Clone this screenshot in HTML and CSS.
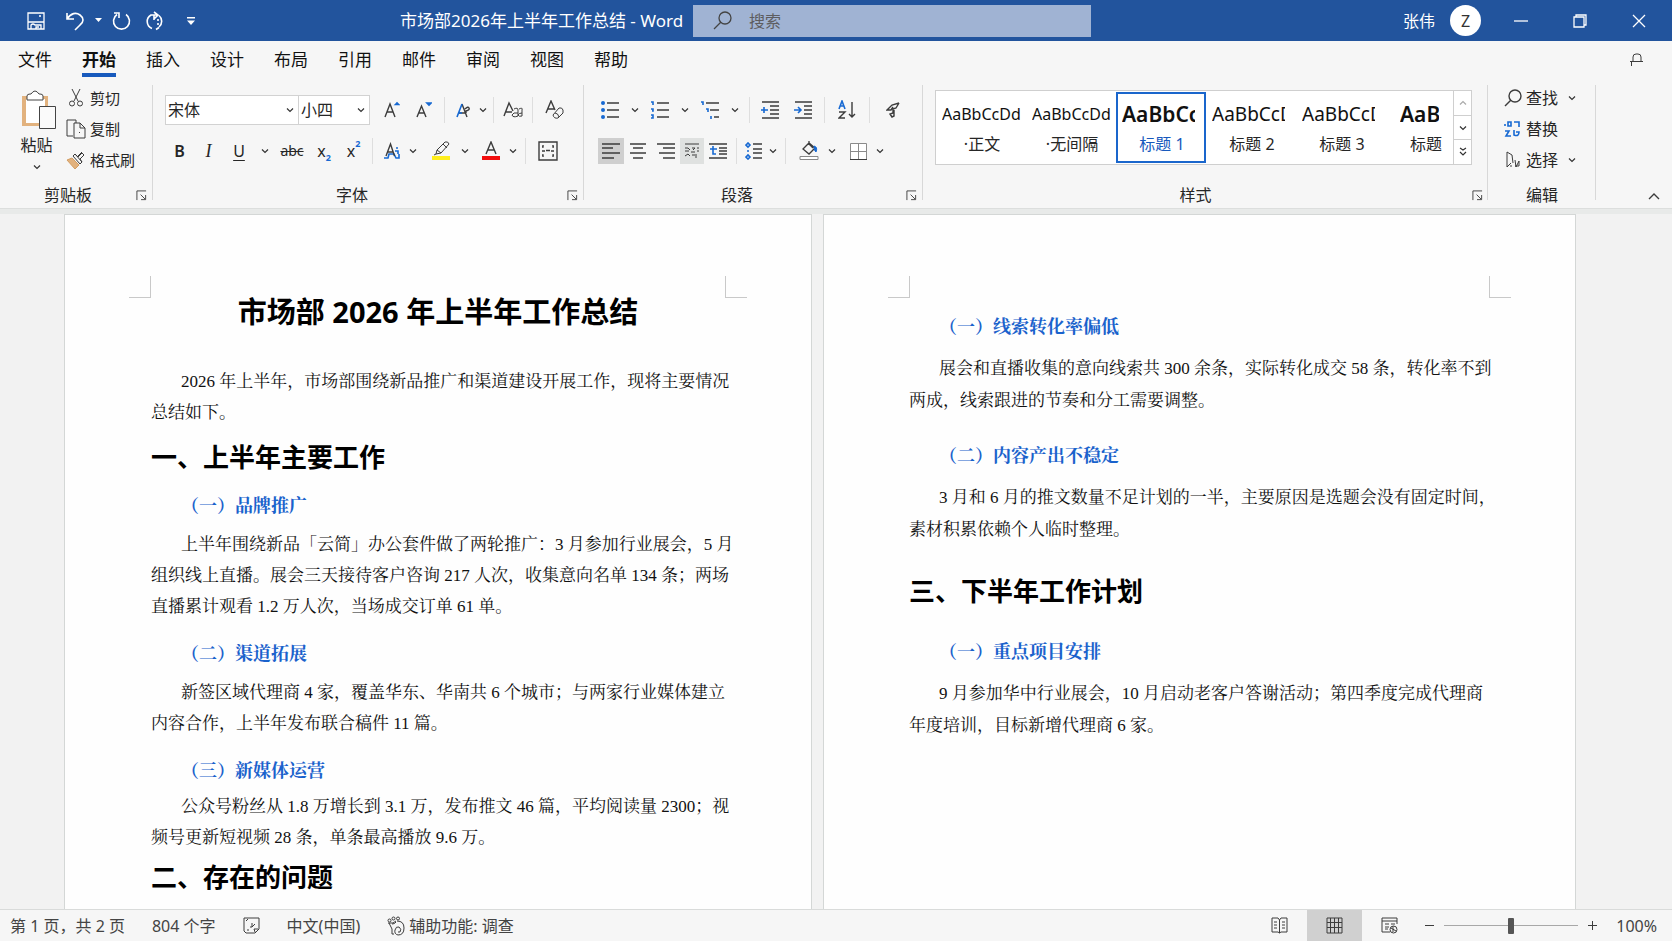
FILE: index.html
```html
<!DOCTYPE html>
<html lang="zh-CN">
<head>
<meta charset="utf-8">
<meta name="viewport" content="width=device-width, initial-scale=1">
<title>市场部2026年上半年工作总结 - Word</title>
<link rel="stylesheet" href="styles.css">
</head>
<body>
<svg class="defs" aria-hidden="true">
  <symbol id="chev" viewBox="0 0 8 8"><path d="M1 2.5l3 3 3-3"/></symbol>
  <symbol id="launch" viewBox="0 0 12 12"><path d="M1 11V1h10M5 5l5 5M10.500 5.500v5h-5"/></symbol>
</svg>

<header class="titlebar">
  <div class="quick">
    <button class="tb save" aria-label="保存"><svg class="ic" width="18" height="18" viewBox="0 0 18 18"><path d="M1 1h16v16H1zM1 10h16M4 17v-4q2-2 4 0h6v4M9 17v-2h3M12 4h2"/></svg></button>
    <button class="tb undo" aria-label="撤消"><svg class="ic bold" width="20" height="20" viewBox="0 0 20 20"><path d="M2 2v6h7M2 8C6 2 11 1 15 4s4 7 0 10l-5 5"/></svg></button>
    <button class="tb caret" aria-label="撤消选项"><svg width="7" height="5" viewBox="0 0 7 5"><path d="M0 0h7L3.500 4z" fill="#fff"/></svg></button>
    <button class="tb redo" aria-label="重复"><svg class="ic bold" width="20" height="20" viewBox="0 0 20 20"><path d="M14 3.500a8 8 0 1 1-9 0M2 2h5v5"/></svg></button>
    <button class="tb sync" aria-label="同步"><svg class="ic bold" width="18" height="20" viewBox="0 0 18 20"><path d="M6 17.500a7.500 7.500 0 0 1-1-13.500h6M8 1l4 3-4 4M8 4v5M13 4.500a7.500 7.500 0 0 1 0 11.500M10 18.500l3-2M12 8v2M12 12v2"/></svg></button>
    <button class="tb more" aria-label="自定义快速访问工具栏"><svg width="8" height="8" viewBox="0 0 8 8"><path d="M0 0h8v1.500H0zM0 3.500h8L4 8z" fill="#fff"/></svg></button>
  </div>
  <div class="doc-name">市场部2026年上半年工作总结 - Word</div>
  <label class="search">
    <svg class="ic" width="20" height="20" viewBox="0 0 20 20"><circle cx="12" cy="7" r="6"/><path d="M8 11l-7 7"/></svg>
    <input type="search" placeholder="搜索" aria-label="搜索">
  </label>
  <div class="window">
    <span class="user">张伟</span>
    <span class="avatar">Z</span>
    <button class="tb win" aria-label="最小化"><svg class="ic" width="14" height="14" viewBox="0 0 14 14"><path d="M0 7h14"/></svg></button>
    <button class="tb win" aria-label="向下还原"><svg class="ic" width="14" height="14" viewBox="0 0 14 14"><path d="M1 3h10v10H1zM3 3V1h10v10h-2"/></svg></button>
    <button class="tb win" aria-label="关闭"><svg class="ic" width="14" height="14" viewBox="0 0 14 14"><path d="M1 1l12 12M13 1L1 13"/></svg></button>
  </div>
</header>

<nav class="tabs">
  <button>文件</button><button class="active">开始</button><button>插入</button><button>设计</button><button>布局</button><button>引用</button><button>邮件</button><button>审阅</button><button>视图</button><button>帮助</button>
  <button class="flag" aria-label="批注"><svg class="ic" width="14" height="14" viewBox="0 0 14 14"><path d="M1.500 13V8.500M0 8.500h13M3 8V4q0-3 3-3h2q3 0 3 3v4"/></svg></button>
</nav>

<section class="ribbon">
  <div class="group clipboard">
    <div class="clip">
      <button class="paste">
        <svg width="36" height="40" viewBox="0 0 36 40"><path d="M1 6h26v30H1z" fill="#e2b27e"/><path d="M5 9h19v24H5z" fill="#fff"/><path d="M6 10V6q0-2 3-2h1q4-6 8 0h1q3 0 3 2v4z" fill="#fff" stroke="#444"/><path d="M18.500 16.500h16v22h-16z" fill="#fafafa" stroke="#444"/></svg>
        <span>粘贴</span>
        <svg class="chev" width="8" height="8"><use href="#chev"/></svg>
      </button>
      <div class="clip-list">
        <button><svg class="ic" width="20" height="18" viewBox="0 0 20 18"><path d="M6 0l6 12M14 0L8 12"/><circle cx="6" cy="14.500" r="2.500"/><circle cx="14" cy="14.500" r="2.500"/></svg>剪切</button>
        <button><svg class="ic" width="20" height="20" viewBox="0 0 20 20"><path d="M7 17H1V1h9v3M8 4h6l5 5v10H8zM14 4v5h5M13 14l1-1"/></svg>复制</button>
        <button><svg class="ic" width="20" height="18" viewBox="0 0 20 18"><path d="M1 9l5-2 7 7-4 4z" fill="#e2b27e" stroke="#d29d63"/><path d="M7 5l7 8 2-2-2-3 4-4-2-2-4 4-3-3zM9 3l7 8M12 5l4-4"/></svg>格式刷</button>
      </div>
    </div>
    <div class="caption"><span>剪贴板</span><button class="launch" aria-label="剪贴板设置"><svg class="ic" width="11" height="11"><use href="#launch"/></svg></button></div>
  </div>

  <div class="group font">
    <div class="row">
      <span class="combo name"><select aria-label="字体"><option>宋体</option></select><svg class="chev" width="8" height="8"><use href="#chev"/></svg></span>
      <span class="combo size"><select aria-label="字号"><option>小四</option></select><svg class="chev" width="8" height="8"><use href="#chev"/></svg></span>
      <button class="w32 lead" aria-label="增大字号"><svg class="ic glyph" width="16" height="18" viewBox="0 0 16 18"><path d="M1 16L6 3l5 13M3 11h6"/><path class="blue" d="M11.500 3.500l1.500-1.500 1.500 1.500z"/></svg></button>
      <button class="w32" aria-label="减小字号"><svg class="ic glyph" width="16" height="18" viewBox="0 0 16 18"><path d="M1 16L5.500 5l4.500 11M3 12h5.500"/><path class="blue" d="M11 2h4l-2 2z"/></svg></button>
      <i class="sep"></i>
      <button class="w28" aria-label="文本效果"><svg class="ic glyph" width="14" height="18" viewBox="0 0 14 18"><path d="M6 3l5 13M3 12h6M9 8q3-3 4-1t-3 3v2"/><path class="blue" d="M1 16L6 3M3 12h3"/></svg></button><button class="w12" aria-label="更多"><svg class="chev" width="8" height="8"><use href="#chev"/></svg></button>
      <i class="sep"></i>
      <button class="w30" aria-label="更改大小写"><svg class="ic" width="20" height="18" viewBox="0 0 20 18"><path d="M1 15L6 2l4 8M3 11h6" stroke-width="1.400"/><path d="M11 8q4-2 4 1v6q-5 2-6-1 1-3 6-2M16 8q4-2 3 1v6q-3 1-4-1 1-2 4-2"/></svg></button>
      <i class="sep"></i>
      <button class="w36" aria-label="清除格式"><svg class="ic" width="20" height="20" viewBox="0 0 20 20"><path d="M1 13L6 1l4 9M3 9h6" stroke-width="1.400"/><path d="M8 15l6-7q3-1 4 2v3l-5 5q-4 1-5-3zM10 13q3 0 4 4"/></svg></button>
    </div>
    <div class="row">
      <button class="w29 bold-letter" aria-label="加粗">B</button>
      <button class="w29 italic-letter" aria-label="倾斜">I</button>
      <button class="w32 underline-letter" aria-label="下划线">U</button><button class="w20" aria-label="下划线样式"><svg class="chev" width="8" height="8"><use href="#chev"/></svg></button>
      <button class="w34 strike" aria-label="删除线">abc</button>
      <button class="w30 letter" aria-label="下标">x<sub>2</sub></button>
      <button class="w29 letter" aria-label="上标">x<sup>2</sup></button>
      <i class="sep"></i>
      <button class="w30" aria-label="文字效果"><svg class="ic glyph" width="16" height="18" viewBox="0 0 16 18"><path class="blue" d="M0 16h4l1-4h5l2 4h3v-4M12 6h2M11 9h3v3"/><path d="M2 14L6.500 2l4 12M4 10h5"/></svg></button><button class="w12" aria-label="更多"><svg class="chev" width="8" height="8"><use href="#chev"/></svg></button>
      <button class="w36 next" aria-label="突出显示"><svg class="ic" width="20" height="20" viewBox="0 0 20 20"><path d="M5 13l1-4 8-8q3-1 4 2l-8 9zM6 9l4 3M12 3l4 4M5 13l-2 1"/><path d="M1 15h18v4H1z" fill="#ffee1c" stroke="none"/></svg></button><button class="w12" aria-label="更多"><svg class="chev" width="8" height="8"><use href="#chev"/></svg></button>
      <button class="w32 next" aria-label="字体颜色"><svg class="ic glyph" width="18" height="20" viewBox="0 0 18 20"><path d="M4 13L9 1l5 12M6 9h6"/><path d="M0 15h18v4H0z" fill="#f20d0d" stroke="none"/></svg></button><button class="w12" aria-label="更多"><svg class="chev" width="8" height="8"><use href="#chev"/></svg></button>
      <i class="sep next"></i>
      <button class="w36" aria-label="字符边框"><svg class="ic glyph" width="20" height="20" viewBox="0 0 20 20"><path d="M1 1h18v18H1z"/><path d="M5 4v2H4M15 4v2h1M5 16v-2H4M15 16v-2h1M4 10h3M8 9.500h4M13 10h3"/></svg></button>
    </div>
    <div class="caption"><span>字体</span><button class="launch" aria-label="字体设置"><svg class="ic" width="11" height="11"><use href="#launch"/></svg></button></div>
  </div>

  <div class="group para">
    <div class="row">
      <button class="w30" aria-label="项目符号"><svg class="ic thick" width="18" height="18" viewBox="0 0 18 18"><path d="M6 2h12M6 9h12M6 16h12"/><g class="dot"><circle cx="2" cy="2" r="2"/><circle cx="2" cy="9" r="2"/><circle cx="2" cy="16" r="2"/></g></svg></button><button class="w20" aria-label="更多"><svg class="chev" width="8" height="8"><use href="#chev"/></svg></button>
      <button class="w30" aria-label="编号"><svg class="ic thick" width="18" height="18" viewBox="0 0 18 18"><path d="M6 2h12M6 9h12M6 16h12"/><path class="blue" d="M0 1h2v3M0 8h2v2H1M0 14h2v3H0"/></svg></button><button class="w20" aria-label="更多"><svg class="chev" width="8" height="8"><use href="#chev"/></svg></button>
      <button class="w30" aria-label="多级列表"><svg class="ic thick" width="18" height="18" viewBox="0 0 18 18"><path d="M5 2h13M9 9h9M13 16h5"/><path class="blue" d="M0 1h2v3M5 8h2v3M10 15v3"/></svg></button><button class="w20" aria-label="更多"><svg class="chev" width="8" height="8"><use href="#chev"/></svg></button>
      <i class="sep"></i>
      <button class="w32" aria-label="减少缩进量"><svg class="ic thick" width="18" height="18" viewBox="0 0 18 18"><path d="M1 1h17M9 5h9M9 9h9M9 13h9M1 17h17"/><path class="blue" d="M0 9h7M3 6v6"/></svg></button>
      <button class="w34" aria-label="增加缩进量"><svg class="ic thick" width="18" height="18" viewBox="0 0 18 18"><path d="M1 1h17M10 5h8M10 9h8M10 13h8M1 17h17"/><path class="blue" d="M0 9h7M4 6l3 3-3 3"/></svg></button>
      <i class="sep"></i>
      <button class="w36" aria-label="排序"><svg class="ic glyph" width="18" height="20" viewBox="0 0 18 20"><path class="blue" d="M1 9l3-8 3 8M2 6h4"/><path d="M1 12h6l-6 6h6M14 2v15M11 14l3 3 3-3"/></svg></button>
      <i class="sep"></i>
      <button class="w38" aria-label="显示编辑标记"><svg class="ic glyph" width="14" height="18" viewBox="0 0 14 18"><path d="M13 2L6 4 1 9h4l2-3M13 2l-3 5-3 1v4l-3 1 2 3 2-1V9"/></svg></button>
    </div>
    <div class="row">
      <button class="w26 on first" aria-label="左对齐"><svg class="ic thick" width="18" height="18" viewBox="0 0 18 18"><path d="M0 2h18M0 6h11M0 11h18M0 16h12"/></svg></button>
      <button class="w28" aria-label="居中"><svg class="ic thick" width="18" height="18" viewBox="0 0 18 18"><path d="M1 2h16M4 6h10M1 11h16M4 16h10"/></svg></button>
      <button class="w28" aria-label="右对齐"><svg class="ic thick" width="18" height="18" viewBox="0 0 18 18"><path d="M0 2h18M6 6h12M2 11h16M6 16h12"/></svg></button>
      <button class="w24 dim" aria-label="两端对齐"><svg class="ic" width="16" height="18" viewBox="0 0 16 18"><path d="M1 2h14M1 6h3l2 2M8 6h3l-2 2M13 6h2M1 9h4M7 10h4M13 9h2M1 14l3-2 2 2M8 13h5M12 14v2"/></svg></button>
      <button class="w28" aria-label="分散对齐"><svg class="ic thick" width="18" height="18" viewBox="0 0 18 18"><path d="M0 2h18M10 6h8M10 9h8M10 12h8M0 16h18"/><path class="blue" d="M1 7h7M4 4v8h3"/></svg></button>
      <i class="sep"></i>
      <button class="w26" aria-label="行距"><svg class="ic thick" width="18" height="18" viewBox="0 0 18 18"><path d="M8 2h9M8 7h9M8 11h9M8 16h9"/><path class="blue" d="M1 3l2-2 2 2-2 2zM1 15l2-2 2 2-2 2zM2 9h2"/></svg></button><button class="w12" aria-label="更多"><svg class="chev" width="8" height="8"><use href="#chev"/></svg></button>
      <i class="sep next"></i>
      <button class="w30 next" aria-label="底纹"><svg class="ic" width="20" height="20" viewBox="0 0 20 20"><path d="M4 8l6-6 6 5-6 6zM10 0v4M9 2l5 5" stroke-width="1.300"/><path d="M15 5q4 1 2 6-2-1-2-6" fill="#1769d2" stroke="#1769d2"/><path d="M1 15.500h18v3H1z" stroke="#888" fill="#fff"/></svg></button><button class="w16" aria-label="更多"><svg class="chev" width="8" height="8"><use href="#chev"/></svg></button>
      <button class="w28 next" aria-label="边框"><svg class="ic" width="17" height="17" viewBox="0 0 17 17"><path d="M.5.5h16v16H.5zM8.500.5v16M.5 8.500h16" stroke="#8a8a8a" fill="#fff"/><path d="M0 16.500h17"/></svg></button><button class="w16" aria-label="更多"><svg class="chev" width="8" height="8"><use href="#chev"/></svg></button>
    </div>
    <div class="caption"><span>段落</span><button class="launch" aria-label="段落设置"><svg class="ic" width="11" height="11"><use href="#launch"/></svg></button></div>
  </div>

  <div class="group styles">
    <div class="gallery">
      <div class="cells">
        <button class="cell"><span class="sample">AaBbCcDd</span><span>·正文</span></button>
        <button class="cell"><span class="sample">AaBbCcDd</span><span>·无间隔</span></button>
        <button class="cell picked"><span class="sample strong">AaBbCc</span><span>标题 1</span></button>
        <button class="cell"><span class="sample mid">AaBbCcD</span><span>标题 2</span></button>
        <button class="cell"><span class="sample mid">AaBbCcD</span><span>标题 3</span></button>
        <button class="cell last"><span class="sample strong">AaB</span><span>标题</span></button>
      </div>
      <div class="scroll">
        <button class="off" aria-label="上一行"><svg class="chev up" width="8" height="8"><use href="#chev"/></svg></button>
        <button aria-label="下一行"><svg class="chev" width="8" height="8"><use href="#chev"/></svg></button>
        <button aria-label="其他"><svg class="chev" width="8" height="10" viewBox="0 0 8 10"><path d="M1 1l3 2 3-2M1 5l3 3 3-3"/></svg></button>
      </div>
    </div>
    <div class="caption"><span>样式</span><button class="launch" aria-label="样式设置"><svg class="ic" width="11" height="11"><use href="#launch"/></svg></button></div>
  </div>

  <div class="group edit">
    <div class="edit-list">
      <button><svg class="ic glyph" width="18" height="18" viewBox="0 0 18 18"><circle cx="11" cy="7" r="6"/><path d="M7 11l-6 6"/></svg>查找<svg class="chev" width="8" height="8"><use href="#chev"/></svg></button>
      <button><svg class="ic" width="18" height="18" viewBox="0 0 18 18"><path class="blue" d="M1 6V4M4 2h3v4H4zM10 2h5v5M1 11h4l-3 5h5M10 10v5q5 2 5-3h-3"/></svg>替换</button>
      <button><svg class="ic" width="18" height="18" viewBox="0 0 18 18"><path d="M3 1v15l4-4M3 1l5 3 1 8M11 9l1 7 3-6v5h-4M6 15h2"/></svg>选择<svg class="chev" width="8" height="8"><use href="#chev"/></svg></button>
    </div>
    <div class="caption"><span>编辑</span></div>
  </div>

  <div class="tail"><button aria-label="折叠功能区"><svg class="ic glyph" width="12" height="8" viewBox="0 0 12 8"><path d="M1 7l5-5 5 5"/></svg></button></div>
</section>

<main class="desk">
  <article class="page one">
    <i class="mark left"></i><i class="mark right"></i>
    <h1 class="doc-title">市场部 2026 年上半年工作总结</h1>
    <p class="intro">2026 年上半年，市场部围绕新品推广和渠道建设开展工作，现将主要情况<br>总结如下。</p>
    <h2>一、上半年主要工作</h2>
    <h3>（一）品牌推广</h3>
    <p>上半年围绕新品「云简」办公套件做了两轮推广：3 月参加行业展会，5 月<br>组织线上直播。展会三天接待客户咨询 217 人次，收集意向名单 134 条；两场<br>直播累计观看 1.2 万人次，当场成交订单 61 单。</p>
    <h3>（二）渠道拓展</h3>
    <p>新签区域代理商 4 家，覆盖华东、华南共 6 个城市；与两家行业媒体建立<br>内容合作，上半年发布联合稿件 11 篇。</p>
    <h3>（三）新媒体运营</h3>
    <p class="tight">公众号粉丝从 1.8 万增长到 3.1 万，发布推文 46 篇，平均阅读量 2300；视<br>频号更新短视频 28 条，单条最高播放 9.6 万。</p>
    <h2 class="tight">二、存在的问题</h2>
  </article>
  <article class="page two">
    <i class="mark left"></i><i class="mark right"></i>
    <h3>（一）线索转化率偏低</h3>
    <p>展会和直播收集的意向线索共 300 余条，实际转化成交 58 条，转化率不到<br>两成，线索跟进的节奏和分工需要调整。</p>
    <h3>（二）内容产出不稳定</h3>
    <p>3 月和 6 月的推文数量不足计划的一半，主要原因是选题会没有固定时间，<br>素材积累依赖个人临时整理。</p>
    <h2>三、下半年工作计划</h2>
    <h3>（一）重点项目安排</h3>
    <p>9 月参加华中行业展会，10 月启动老客户答谢活动；第四季度完成代理商<br>年度培训，目标新增代理商 6 家。</p>
  </article>
</main>

<footer class="status">
  <button>第 1 页，共 2 页</button>
  <button>804 个字</button>
  <button aria-label="校对"><svg class="ic" width="17" height="17" viewBox="0 0 17 17"><path d="M1 1h15v11l-4 4H3l-2-2zM3 4l2-2M4 13h2M7 10h2V6M9 10l3-3M15 12h-4l1 3"/></svg></button>
  <button>中文(中国)</button>
  <button class="access"><svg class="ic" width="18" height="20" viewBox="0 0 18 20"><circle cx="2.500" cy="4.500" r="1.500"/><circle cx="6.500" cy="2.500" r="1.500"/><circle cx="11" cy="2.500" r="1.500"/><path d="M1 7h5l3-2M2 7l3 6v5h2M5 8q3 0 4-2M10 5q7 0 7 7 0 7-6 7-4-1-3-5 1-4 4-3 3 2 1 5h-2"/></svg>辅助功能: 调查</button>
  <div class="views">
    <button aria-label="阅读视图"><svg class="ic" width="17" height="17" viewBox="0 0 17 17"><path d="M8.500 3L7 1H1v14h6l1.500 1L10 15h6V1h-6zM8.500 3v13M3 5h3M3 8h3M3 11h3M11 5h3M11 8h3M11 11h3"/></svg></button>
    <button class="current" aria-label="页面视图"><svg class="ic" width="17" height="17" viewBox="0 0 17 17"><path d="M1 1h15v15H1zM4.500 1v15M8.500 1v15M12.500 1v15M1 5.500h15M1 10.500h15"/></svg></button>
    <button aria-label="Web 版式"><svg class="ic" width="17" height="17" viewBox="0 0 17 17"><path d="M9 15H1V1h15v6M1 4h15M4 7h4M4 10h4M4 12h3M10 7h4"/><circle cx="12.500" cy="12.500" r="3.500"/><path d="M10 11l5 3M12 9v6"/></svg></button>
  </div>
  <div class="zoom">
    <button aria-label="缩小"><svg class="ic" width="9" height="9" viewBox="0 0 9 9"><path d="M0 4.500h9"/></svg></button>
    <input type="range" min="0" max="100" value="50" aria-label="缩放">
    <button aria-label="放大"><svg class="ic" width="9" height="9" viewBox="0 0 9 9"><path d="M0 4.500h9M4.500 0v9"/></svg></button>
    <button class="percent">100%</button>
  </div>
</footer>
</body>
</html>
```

FILE: styles.css
```css
* { box-sizing: border-box; }

body {
  margin: 0;
  height: 100vh;
  display: flex;
  flex-direction: column;
  overflow: hidden;
  background: #f6f6f6;
  color: #262626;
  font-family: "Noto Sans", "Noto Sans CJK SC", sans-serif;
  font-size: 16px;
  line-height: 20px;
}

button, input, select { font: inherit; color: inherit; }

button {
  border: 0;
  padding: 0;
  margin: 0;
  background: none;
  display: inline-flex;
  align-items: center;
  justify-content: center;
  flex: none;
  white-space: nowrap;
}

.defs { display: none; }
svg { display: block; flex: none; }
.ic, .chev { fill: none; stroke: currentColor; stroke-width: 1; }
.ic { color: #3c3c3c; }
.ic.glyph { stroke-width: 1.4; }
.chev { stroke-width: 1.2; color: #333; }
.chev.up { transform: rotate(180deg); }
.ic.thick { stroke-width: 1.5; }
.blue { stroke: #1769d2; stroke-width: 1.6; }
.dot { fill: #1769d2; stroke: none; }

/* Title bar */
.titlebar {
  flex: none;
  height: 41px;
  display: flex;
  align-items: center;
  background: #22549d;
  color: #fff;
}
.titlebar .ic { color: #fff; stroke-width: 1.3; }
.titlebar .ic.bold { stroke-width: 1.6; }
.quick { flex: 0 0 400px; display: flex; align-items: center; padding-left: 16px; }
.tb { height: 40px; }
.save { width: 40px; }
.undo { width: 38px; }
.caret { width: 8px; }
.redo { width: 40px; }
.sync { width: 26px; }
.more { width: 46px; }
.doc-name { flex: 0 0 293px; white-space: nowrap; font-size: 17px; }
.search {
  flex: 0 1 398px;
  height: 32px;
  display: flex;
  align-items: center;
  gap: 16px;
  padding-left: 20px;
  background: #a0b3d3;
}
.search .ic { color: #444; }
.search input {
  flex: 1;
  min-width: 0;
  border: 0;
  padding: 0;
  outline: 0;
  background: none;
}
.search input::placeholder { color: #5d5d60; opacity: 1; }
.window { margin-left: auto; display: flex; align-items: center; padding-right: 4px; }
.avatar {
  width: 31px;
  height: 31px;
  margin: 0 10px 0 15px;
  border-radius: 50%;
  background: #fff;
  color: #333;
  display: grid;
  place-items: center;
}
.win { width: 59px; }

/* Tabs */
.tabs {
  flex: none;
  height: 44px;
  display: flex;
  align-items: flex-start;
  gap: 30px;
  padding: 5px 28px 0 18px;
  font-size: 17px;
  color: #111;
}
.tabs button { height: 31px; border-bottom: 4px solid transparent; }
.tabs .active { border-color: #185abd; font-weight: 600; }
.tabs .flag { margin-left: auto; }

/* Ribbon */
.ribbon {
  flex: none;
  height: 124px;
  display: flex;
  border-bottom: 1px solid #dcdedd;
}
.group { position: relative; display: flex; flex-direction: column; flex: none; padding-bottom: 1px; }
.group::after {
  content: "";
  position: absolute;
  top: 0;
  right: 0;
  bottom: 8px;
  width: 1px;
  background: #d8d8d8;
}
.clipboard { width: 153px; }
.font { width: 431px; padding-top: 10px; padding-left: 12px; }
.para { width: 339px; padding-top: 10px; padding-left: 11px; }
.styles { flex: 1 1 0; min-width: 0; padding-top: 5px; padding-left: 12px; padding-right: 16px; }
.edit { width: 108px; }
.tail { flex: 0 0 76px; display: flex; justify-content: flex-end; align-items: flex-end; padding: 0 12px 8px 0; }

.caption {
  margin-top: auto;
  height: 24px;
  display: flex;
  align-items: center;
  padding-right: 6px;
}
.caption span { flex: 1; text-align: center; }
.font .caption { margin-left: -12px; }
.para .caption { margin-left: -11px; }
.font .caption span, .para .caption span { padding-right: 16px; }
.styles .caption { margin: auto -16px 0 -12px; padding-right: 5px; }
.styles .caption span { padding-right: 4px; }
.edit .caption { padding: 0; }

.clip { display: flex; }
.paste { flex-direction: column; width: 64px; padding: 4px 0 0 9px; }
.paste svg:first-child { margin-left: 4px; }
.paste span { margin: 5px 0 8px; }
.clip-list, .edit-list { display: flex; flex-direction: column; gap: 7px; padding-top: 1px; }
.clip-list button, .edit-list button { height: 24px; justify-content: flex-start; gap: 4px; font-size: 15px; }
.clip-list { padding-left: 2px; }
.edit-list { padding-left: 16px; }
.edit-list button { font-size: 16px; }
.edit-list .chev { margin-left: 6px; }

.row { display: flex; align-items: center; height: 30px; margin-bottom: 11px; }
.row + .row { margin-bottom: 0; }
.row button { height: 26px; }
.w12 { width: 12px; } .w16 { width: 16px; } .w20 { width: 20px; } .w24 { width: 24px; }
.w26 { width: 26px; } .w28 { width: 28px; } .w29 { width: 29px; } .w30 { width: 30px; }
.w32 { width: 32px; } .w34 { width: 34px; } .w36 { width: 36px; } .w38 { width: 38px; }
.lead { margin-left: 6px; }
.sep { flex: none; width: 1px; height: 26px; margin: 0 4px; background: #dedede; }
.row .next { margin-left: 4px; }
.row .sep.next { margin-left: 6px; }
.row .first { margin-left: 3px; }
.on { background: #cfcfcf; }
.dim { background: #dfe1e0; }
.bold-letter { font-weight: 600; }
.italic-letter { font-style: italic; font-family: "Liberation Serif", serif; font-size: 18px; }
.underline-letter { text-decoration: underline; text-underline-offset: 3px; }
.strike { font-size: 14px; text-decoration: line-through 1px; }
.letter sub, .letter sup { font-size: 9px; line-height: 12px; color: #1769d2; font-weight: 700; }
.letter sub { align-self: flex-end; }
.letter sup { align-self: flex-start; }

.combo {
  position: relative;
  height: 30px;
  background: #fff;
  border: 1px solid #d2d2d2;
}
.combo.name { width: 134px; }
.combo.size { width: 72px; margin-left: -1px; }
.combo select {
  width: 100%;
  height: 28px;
  padding: 0 20px 0 2px;
  border: 0;
  appearance: none;
  background: none;
}
.combo .chev { position: absolute; right: 4px; top: 10px; pointer-events: none; }

.gallery { display: flex; height: 75px; border: 1px solid #cfcfcf; background: #fff; }
.cells { flex: 1; min-width: 0; display: flex; overflow: hidden; }
.cell {
  width: 90px;
  flex-direction: column;
  gap: 7px;
  padding: 0 2px 0 4px;
  border: 2px solid transparent;
  margin: 1px 0;
}
.cell.last { width: 68px; padding: 0 0 0 12px; }
.cell.picked { border-color: #1a66cc; }
.cell.picked span:last-child { color: #185abd; }
.sample { align-self: flex-start; width: 80px; height: 26px; line-height: 26px; overflow: hidden; text-align: left; color: #111; }
.sample.mid { width: 73px; font-size: 19px; }
.sample.strong { width: 73px; font-size: 21px; font-weight: 600; }
.last .sample.strong { width: 39px; }
.scroll { flex: none; width: 18px; display: flex; flex-direction: column; border-left: 1px solid #cfcfcf; }
.scroll button { flex: 1; }
.scroll button + button { border-top: 1px solid #cfcfcf; }
.scroll .off .chev { color: #aaa; }

/* Document area */
.desk {
  flex: 1;
  min-height: 0;
  display: grid;
  grid-template-columns: 748fr 753fr;
  gap: 11px;
  padding: 0 96px 0 64px;
  background: #f2f2f2;
  border-top: 5px solid #e8eae9;
  overflow: hidden;
}
.page {
  position: relative;
  min-width: 0;
  border: 1px solid #d4d7d6;
  border-bottom: 0;
  background: #fefefe;
  color: #111;
  white-space: nowrap;
}
.one { padding: 77px 86px 0; }
.two { padding: 98px 86px 0 85px; }
.page h1, .page h2, .page h3, .page p { margin: 0; }
.doc-title { font-size: 29px; line-height: 40px; text-align: center; color: #000; }
.page h2 { font-size: 26px; line-height: 36px; color: #000; }
.page h3 {
  padding-left: 30px;
  font-family: "Liberation Serif", "Noto Serif CJK SC", "Noto Sans CJK SC", serif;
  font-size: 18px;
  line-height: 28px;
  color: #1a62cc;
}
.page p {
  text-indent: 30px;
  font-family: "Liberation Serif", "Noto Serif CJK SC", "Noto Sans CJK SC", serif;
  font-size: 17px;
  line-height: 31px;
}
.page .intro { margin-top: 34px; }
.one h2 { margin-top: 11px; }
.one h3 { margin-top: 17px; }
.one h3 + p { margin-top: 9px; }
.one p + h3 { margin-top: 18px; }
.one .tight { margin-top: 6px; }
.two p { line-height: 32px; }
.two h3 + p { margin-top: 12px; }
.two p + h3 { margin-top: 25px; }
.two h2 { margin-top: 27px; }
.two h2 + h3 { margin-top: 29px; }
.mark { position: absolute; top: 61px; width: 22px; height: 22px; border-bottom: 1px solid #c9c9c9; }
.mark.left { left: 64px; border-right: 1px solid #c9c9c9; }
.mark.right { right: 64px; border-left: 1px solid #c9c9c9; }

/* Status bar */
.status {
  flex: none;
  height: 32px;
  display: flex;
  align-items: center;
  gap: 27px;
  padding: 0 15px 0 10px;
  border-top: 1px solid #d9dbda;
  color: #444;
}
.status button { height: 31px; }
.access { gap: 4px; }
.views { margin-left: auto; display: flex; }
.views button { width: 55px; }
.views .current { background: #d0d0d0; }
.zoom { display: flex; align-items: center; gap: 10px; margin-left: -19px; }
.zoom input {
  width: 134px;
  height: 20px;
  margin: 0;
  appearance: none;
  background: linear-gradient(#a8a8a8, #a8a8a8) center / 100% 1px no-repeat;
}
.zoom input::-webkit-slider-thumb {
  appearance: none;
  width: 6px;
  height: 16px;
  border-radius: 1px;
  background: #555;
}
.percent { margin-left: 9px; }
```
